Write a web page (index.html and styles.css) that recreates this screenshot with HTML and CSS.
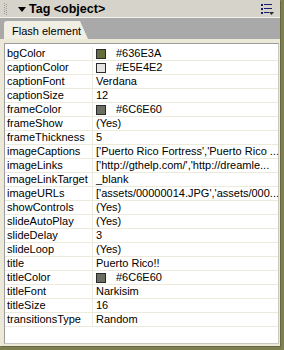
FILE: index.html
```html
<!DOCTYPE html>
<html lang="en">
<head>
    <meta charset="UTF-8">
    <title>Tag &lt;object&gt;</title>
    <link rel="stylesheet" href="styles.css">
</head>
<body>
    <div class="panel">
        <div class="titlebar">
            <svg class="grip" width="4" height="12" viewBox="0 0 4 12">
                <g fill="#9c9a94">
                    <rect x="0" y="0" width="1" height="1"/><rect x="0" y="2" width="1" height="1"/>
                    <rect x="0" y="4" width="1" height="1"/><rect x="0" y="6" width="1" height="1"/>
                    <rect x="0" y="8" width="1" height="1"/><rect x="0" y="10" width="1" height="1"/>
                    <rect x="2" y="1" width="1" height="1"/><rect x="2" y="3" width="1" height="1"/>
                    <rect x="2" y="5" width="1" height="1"/><rect x="2" y="7" width="1" height="1"/>
                    <rect x="2" y="9" width="1" height="1"/><rect x="2" y="11" width="1" height="1"/>
                </g>
            </svg>
            <span class="arrow"></span>
            <span class="title">Tag &lt;object&gt;</span>
            <svg class="menu-icon" width="13" height="11" viewBox="0 0 13 11">
                <g fill="#1c1c6c">
                    <rect x="0" y="0" width="2" height="2"/><rect x="3" y="0" width="8" height="1"/>
                    <rect x="0" y="4" width="2" height="2"/><rect x="3" y="4" width="8" height="1"/>
                    <rect x="0" y="8" width="2" height="2"/><rect x="3" y="8" width="5" height="1"/>
                </g>
                <path d="M8 8h5l-2.5 3z" fill="#2a2a2a"/>
            </svg>
        </div>
        <div class="tabs">
            <div class="tab">Flash element</div>
        </div>
        <div class="sheet">
            <div class="grid">
                <div class="row"><span class="name">bgColor</span><span class="value"><i class="swatch" style="background:#636E3A"></i>#636E3A</span></div>
                <div class="row"><span class="name">captionColor</span><span class="value"><i class="swatch" style="background:#E5E4E2"></i>#E5E4E2</span></div>
                <div class="row"><span class="name">captionFont</span><span class="value">Verdana</span></div>
                <div class="row"><span class="name">captionSize</span><span class="value">12</span></div>
                <div class="row"><span class="name">frameColor</span><span class="value"><i class="swatch" style="background:#6C6E60"></i>#6C6E60</span></div>
                <div class="row"><span class="name">frameShow</span><span class="value">(Yes)</span></div>
                <div class="row"><span class="name">frameThickness</span><span class="value">5</span></div>
                <div class="row"><span class="name">imageCaptions</span><span class="value">['Puerto Rico Fortress','Puerto Rico ...</span></div>
                <div class="row"><span class="name">imageLinks</span><span class="value">['http://gthelp.com/','http://dreamle...</span></div>
                <div class="row"><span class="name">imageLinkTarget</span><span class="value">_blank</span></div>
                <div class="row"><span class="name">imageURLs</span><span class="value">['assets/00000014.JPG','assets/000...</span></div>
                <div class="row"><span class="name">showControls</span><span class="value">(Yes)</span></div>
                <div class="row"><span class="name">slideAutoPlay</span><span class="value">(Yes)</span></div>
                <div class="row"><span class="name">slideDelay</span><span class="value">3</span></div>
                <div class="row"><span class="name">slideLoop</span><span class="value">(Yes)</span></div>
                <div class="row"><span class="name">title</span><span class="value">Puerto Rico!!</span></div>
                <div class="row"><span class="name">titleColor</span><span class="value"><i class="swatch" style="background:#6C6E60"></i>#6C6E60</span></div>
                <div class="row"><span class="name">titleFont</span><span class="value">Narkisim</span></div>
                <div class="row"><span class="name">titleSize</span><span class="value">16</span></div>
                <div class="row"><span class="name">transitionsType</span><span class="value">Random</span></div>
            </div>
        </div>
    </div>
</body>
</html>
```

FILE: styles.css
```css
/* Page */
body {
    margin: 0;
    width: 284px;
    height: 350px;
    background: #7f8052;
    font-family: "Liberation Sans", Arial, sans-serif;
    font-size: 11px;
    color: #000;
    overflow: hidden;
}

/* Panel frame */
.panel {
    width: 280px;
    height: 346px;
    display: flex;
    flex-direction: column;
    background: #ece9d8;
    box-shadow: 1px 1px 0 #66673f;
}

/* Title bar */
.titlebar {
    height: 17px;
    display: flex;
    align-items: center;
    background: #d6d3cb;
    border-bottom: 1px solid #f3f2ec;
}

.grip {
    margin-left: 4px;
    margin-top: 1px;
}

.arrow {
    width: 0;
    height: 0;
    margin-left: 10px;
    margin-top: 2px;
    border-left: 4px solid transparent;
    border-right: 4px solid transparent;
    border-top: 5px solid #000;
}

.title {
    margin-left: 3px;
    margin-top: 1px;
    font-weight: bold;
    font-size: 12.5px;
}

.menu-icon {
    margin-left: auto;
    margin-right: 6px;
    margin-top: 2px;
}

/* Tab strip */
.tabs {
    height: 21px;
    box-sizing: border-box;
    padding: 3px 0 0 4px;
    background: #a9a9a9;
    display: flex;
}

.tab {
    width: 84px;
    box-sizing: border-box;
    padding: 4px 0 0 8px;
    background: #f1efe4;
    border-top-left-radius: 3px;
    clip-path: polygon(0 0, 76px 0, 84px 100%, 0 100%);
}

/* Property sheet */
.sheet {
    flex: 1;
    display: flex;
    padding: 4px 1px 2px 4px;
}

.grid {
    flex: 1;
    background: #fff;
    border: 1px solid #9d9d9d;
    border-right-color: #c9c8c0;
    border-bottom-color: #c9c8c0;
    padding-top: 3px;
}

.row {
    display: grid;
    grid-template-columns: 88px 1fr;
    height: 13px;
    line-height: 13px;
    border-bottom: 1px solid #ebeadb;
}

.name {
    padding-left: 2px;
    border-right: 1px solid #ebeadb;
    white-space: nowrap;
    overflow: hidden;
}

.value {
    padding-left: 3px;
    white-space: nowrap;
    overflow: hidden;
    display: flex;
    align-items: center;
}

.swatch {
    width: 8px;
    height: 8px;
    margin-right: 10px;
    border: 1px solid #2b2b2b;
}
```
